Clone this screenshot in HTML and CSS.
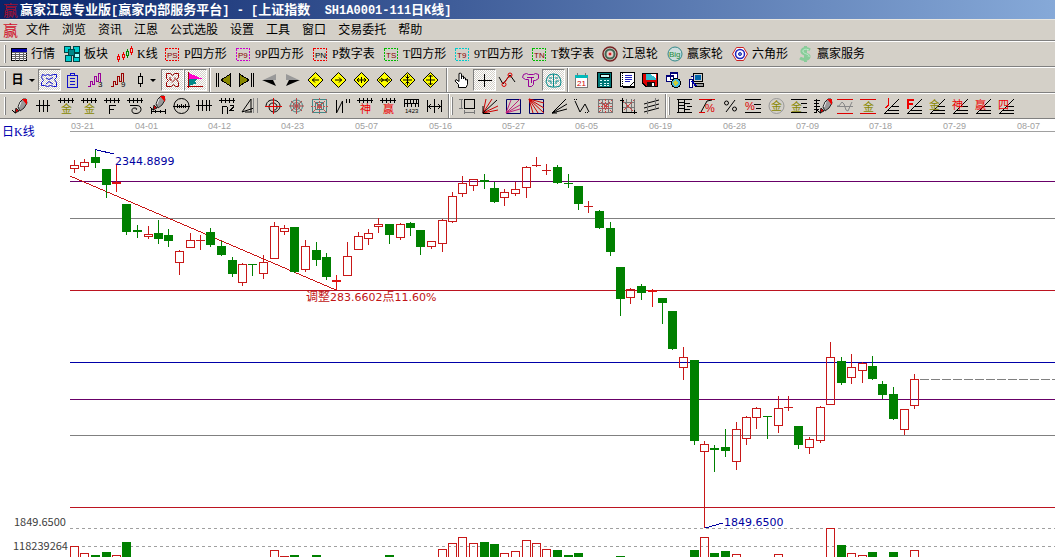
FILE: index.html
```html
<!DOCTYPE html>
<html lang="zh-CN">
<head>
<meta charset="utf-8">
<title>赢家江恩专业版</title>
<link rel="stylesheet" href="styles.css">
</head>
<body>
<svg class="defs" aria-hidden="true">
  <symbol id="comb" viewBox="0 0 17 16"><path d="M0 2.500h16M2.500 0v5M6.500 0v5M10.500 0v5M14.500 0v5"/></symbol>
  <symbol id="steps" viewBox="0 0 17 16"><path d="M1 15.500h15M5 12.500h11M9 8.500h7M1 16L16 1"/></symbol>
  <symbol id="diamond" viewBox="0 0 17 16"><path d="M8.500 .5L16 8L8.500 15.500L1 8z" fill="#ff0" stroke="#000"/></symbol>
  <symbol id="pen" viewBox="0 0 17 16"><g shape-rendering="auto"><path d="M6 9l2-5 3-3h3l1 4-3 5-4 3z" fill="#999" stroke="#222"/><path d="M10 1h5v6z" fill="#e00" stroke="none"/><path d="M4 10l3 3-4 2z" fill="#d00" stroke="#222"/><path d="M0 12l2 2 2 1" stroke="#000"/><path d="M9 4l-2 5" stroke="#eee"/></g></symbol>
</svg>

<header class="titlebar"><span class="logo">赢</span><h1>赢家江恩专业版<span>[</span>赢家内部服务平台<span>] - [</span>上证指数<span>&nbsp; SH1A0001-111</span>日<span>K</span>线<span>]</span></h1></header>

<nav class="menubar"><span class="logo">赢</span>
  <button>文件</button><button>浏览</button><button>资讯</button><button>江恩</button><button>公式选股</button><button>设置</button><button>工具</button><button>窗口</button><button>交易委托</button><button>帮助</button>
</nav>

<div class="toolbar links">
  <i class="grip"></i>
  <button class="tool"><svg class="ic"><path d="M.5 2.500h15v12h-15z" fill="#fff"/><path d="M1 3h15v3H1z" fill="#00a" stroke="none"/><path d="M1 6.500h15M1 8.500h15M1 10.500h15M1 12.500h15M4.500 6v9M8.500 6v9M12.500 6v9" stroke="#666"/></svg><span class="w24">行情</span></button>
  <button class="tool"><svg class="ic"><g fill="#0cc" stroke="#044"><path d="M.5.5h6v6h-6zM9.500.5h6v6h-6zM1.500 9.500h6v6h-6zM9.500 9.500h6v6h-6z"/><path d="M4.500 3.500h6v6h-6z" fill="#088"/><path d="M10.500 7.500h5v4h-5z" fill="#9ff"/></g></svg><span class="w24">板块</span></button>
  <button class="tool"><svg class="ic"><g stroke="#e00"><path d="M1.500 8v2M1.500 14v2M.5 10.500h2v3h-2zM6.500 6v2M6.500 12v2M5.500 8.500h2v3h-2zM14.500 0v2M14.500 7v2M13.500 2.500h2v4h-2z"/><path d="M10.500 3v2M10.500 10v2M9.500 5.500h2v4h-2z" stroke="#080"/></g></svg><span class="w18">K线</span></button>
  <button class="tool"><svg class="ic"><path class="dot" d="M1.500 2.500h13v12h-13z" stroke="#e00"/><text x="3" y="12" fill="#800">PS</text></svg><span class="w42">P四方形</span></button>
  <button class="tool"><svg class="ic"><path class="dot" d="M1.500 2.500h13v12h-13z" stroke="#c0c"/><text x="3" y="12" fill="#800">P9</text></svg><span class="w48">9P四方形</span></button>
  <button class="tool"><svg class="ic"><path class="dot" d="M1.500 2.500h13v12h-13z" stroke="#e00"/><text x="3" y="12" fill="#000">PN</text></svg><span class="w42">P数字表</span></button>
  <button class="tool"><svg class="ic"><path class="dot" d="M1.500 2.500h13v12h-13z" stroke="#0b0"/><text x="3" y="12" fill="#800">TS</text></svg><span class="w42">T四方形</span></button>
  <button class="tool"><svg class="ic"><path class="dot" d="M1.500 2.500h13v12h-13z" stroke="#0cc"/><text x="3" y="12" fill="#800">T9</text></svg><span class="w48">9T四方形</span></button>
  <button class="tool"><svg class="ic"><path class="dot" d="M1.500 2.500h13v12h-13z" stroke="#0b0"/><text x="3" y="12" fill="#800">TN</text></svg><span class="w42">T数字表</span></button>
  <button class="tool"><svg class="ic soft"><circle cx="8" cy="8" r="7" stroke="#722" stroke-width="1.500"/><circle cx="8" cy="8" r="4.500" stroke="#465" stroke-width="2"/><circle cx="8" cy="8" r="2" fill="#c22" stroke="#fcc"/></svg><span class="w36">江恩轮</span></button>
  <button class="tool"><svg class="ic soft"><circle cx="8" cy="8" r="7" fill="#cdd" stroke="#388"/><text x="2" y="11" fill="#283">Big</text></svg><span class="w36">赢家轮</span></button>
  <button class="tool"><svg class="ic soft"><path d="M4.500 1.500h7l4 6.500-4 6.500h-7L.5 8z" fill="#fff" stroke="#c22"/><circle cx="8" cy="8" r="4.500" stroke="#22b" stroke-width="1.500"/><circle cx="8" cy="8" r="1.500" fill="#69c" stroke="#22b"/></svg><span class="w36">六角形</span></button>
  <button class="tool"><svg class="ic soft"><g stroke="#8c9" stroke-width="3"><path d="M13 4C9 1 4 3 5 6s8 2 7 5-6 3-9 1M8.500 0v16"/></g><path d="M12 4C8 2 5 4 6 6s7 2 6 5" stroke="#bec"/></svg><span class="w48">赢家服务</span></button>
</div>

<div class="toolbar">
  <i class="grip"></i>
  <button class="btn drop period" aria-label="周期">日<i class="caret"></i></button>
  <button class="btn on" aria-label="形态"><svg class="ic soft tint-blue"><path d="M1.500 2.500l3 1 2-1 3 1 3-1h3v3l-2 2 2 3v4h-3l-3-1-3 1-3-1h-3v-3l2-2-2-3zM5 6l3 1.500 4-2M5 12l3-2.500 4 2.500"/></svg></button>
  <button class="btn" aria-label="剪贴板"><svg class="ic tint-blue"><rect x="3.500" y="3.500" width="10" height="12" rx="1"/><path d="M6.500 3V1.500h4V3M6 6.500h5M6 9.500h5M6 12.500h5"/></svg></button>
  <button class="btn" aria-label="三浪"><svg class="ic"><path d="M1 14.500h2.500v-5h2v3h2v-8h2v5h2v-8h2v8" stroke="#909"/><text x="11" y="15">3</text></svg></button>
  <button class="btn" aria-label="九浪"><svg class="ic"><path d="M1 14.500h2.500v-5h2v3h2v-8h2v5h2v-8h2v8" stroke="#900"/><text x="11" y="15">9</text></svg></button>
  <button class="btn drop" aria-label="K线样式"><svg class="ic slim"><path d="M4.500 1v3M4.500 12v3M2.500 4.500h4v7h-4z"/></svg><i class="caret"></i></button>
  <button class="btn on" aria-label="轮廓"><svg class="ic soft tint-red"><path d="M2.500 1.500h4l2 2 2-2h4v4l-2 2 2 3v4h-3l-2-2-2 2h-5v-4l2-2-2-2zM6 5v3h2M11 5.500v2l-3 3"/></svg></button>
  <button class="btn on" aria-label="筹码"><svg class="ic"><path d="M2 1l14 6H2z" fill="#f0c" stroke="none"/><path d="M2 7h9l-4 3 3 1-8 3z" fill="#088" stroke="none"/><path d="M1.500 0v16M0 14.500h16" stroke="#a00"/></svg></button>
  <i class="sep s5"></i>
  <button class="btn" aria-label="首页"><svg class="ic"><path d="M15.500 2v12L6 8z" fill="#880"/><path d="M1.500 1v14M3.500 1v14" /></svg></button>
  <button class="btn" aria-label="末页"><svg class="ic"><path d="M1.500 2v12L11 8z" fill="#880"/><path d="M13.500 1v14M15.500 1v14"/></svg></button>
  <button class="btn" aria-label="前移"><svg class="ic soft"><path d="M15 2v6H2z" fill="#999" stroke="none"/><path d="M15 14l-3-6H1z" fill="#000" stroke="none"/></svg></button>
  <button class="btn" aria-label="后移"><svg class="ic soft"><path d="M2 2v6h13z" fill="#999" stroke="none"/><path d="M2 14l3-6h11z" fill="#000" stroke="none"/></svg></button>
  <button class="btn" aria-label="左"><svg class="ic soft"><use href="#diamond"/><path d="M5 8h7M8 5.500L5.500 8 8 10.500"/></svg></button>
  <button class="btn" aria-label="右"><svg class="ic soft"><use href="#diamond"/><path d="M5 8h7M9 5.500L11.500 8 9 10.500"/></svg></button>
  <button class="btn" aria-label="展宽"><svg class="ic soft"><use href="#diamond"/><path d="M4 8h9M6 6L4 8l2 2M11 6l2 2-2 2M8.500 5v6"/></svg></button>
  <button class="btn" aria-label="收窄"><svg class="ic soft"><use href="#diamond"/><path d="M3 8h11M5 6l2.500 2L5 10M12 6L9.500 8l2.500 2"/></svg></button>
  <button class="btn" aria-label="压缩"><svg class="ic soft"><use href="#diamond"/><path d="M4 8h9M8.500 2.500v11M6.500 4.500l2 2 2-2M6.500 11.500l2-2 2 2"/></svg></button>
  <button class="btn" aria-label="拉伸"><svg class="ic soft"><use href="#diamond"/><path d="M4 8h9M8.500 3v10M6.500 5l2-2 2 2M6.500 11l2 2 2-2"/></svg></button>
  <i class="sep s8"></i>
  <button class="btn" aria-label="拖动"><svg class="ic soft"><path d="M5.500 15.500v-3L2 9l1-1.500 3 2V1.500l1.500-.5 1 1v5V4.500l2-.5v3-1.500l2 .5v2l2-.5v5l-1.500 3z" fill="#fff"/></svg></button>
  <button class="btn on" aria-label="十字光标"><svg class="ic"><path d="M2 8.500h14M8.500 2v13"/></svg></button>
  <button class="btn" aria-label="转折点"><svg class="ic soft"><path d="M0 5l4 7 7-9 5 7" /><g stroke="#d00"><circle cx="5" cy="12.500" r="2"/><circle cx="11" cy="3" r="2"/><path d="M6 10l4-6"/></g></svg></button>
  <button class="btn" aria-label="图案"><svg class="ic soft tint-purple"><path d="M1.500 2.500l3-1 2 1h5l2-1 3 1v4l-3 2h-2v4l-2 2h-3v-7h-3l-3-2zM5 5.500h7M9.500 6v5"/></svg></button>
  <button class="btn on" aria-label="思维"><svg class="ic soft tint-teal"><path d="M8.500 2v13M8 2l-4 1-2 3-1 4 2 4 4 1h4l4-1 1-4-1-4-2-3-4-1zM4 6h3M3 9h3v3M10 6h3M11 9h3M11 9v3"/></svg></button>
  <i class="sep s5"></i>
  <button class="btn" aria-label="日历"><svg class="ic"><path d="M2.500 3.500h12v12h-12z" fill="#fff" stroke="#777"/><path d="M2 3h13v3H2z" fill="#0bb" stroke="none"/><path d="M4.500 1v3M12.500 1v3" stroke="#777"/><text x="4" y="14" fill="#c00">21</text></svg></button>
  <button class="btn" aria-label="计算器"><svg class="ic"><path d="M1.500.5h14v15h-14z" fill="#077"/><path d="M4 2.500h9v3H4z" fill="#cff"/><path d="M4 8.500h2M7.500 8.500h2M11 8.500h2M4 11h2M7.500 11h2M11 11h2M4 13.500h2M7.500 13.500h2M11 13.500h2" stroke="#dff"/></svg></button>
  <button class="btn" aria-label="记事本"><svg class="ic"><path d="M1.500.5h14v14h-14z" fill="#fff"/><path d="M3.500 1v14" stroke-dasharray="1 1"/><path d="M6 3.500h7M6 5.500h7M6 7.500h7M6 9.500h5" stroke="#22b"/><path d="M11 14l4-4M15.500 1v14.500H4"/></svg></button>
  <button class="btn" aria-label="保存"><svg class="ic"><path d="M.5 1.500h15v13H4l-3-3z" fill="#d00"/><path d="M4 2h10v6H4z" fill="#3bc" stroke="none"/><path d="M8 2h6v4z" fill="#fff" stroke="none"/><path d="M5 10h8v5H5z" fill="#111" stroke="none"/><path d="M10 11h2v3h-2z" fill="#fff" stroke="none"/></svg></button>
  <button class="btn" aria-label="网络"><svg class="ic"><path d="M5.500.5h7v7h-7zM1.500 3.500h7v6h-7z" fill="#fff" stroke="#007"/><path d="M2 4.500h6M6 1.500h6" stroke="#007"/><circle cx="11" cy="11" r="4.500" fill="#4bd"/><path d="M8 10l3-2 2 3-3 3z" fill="#cc3" stroke="none"/></svg></button>
  <button class="btn" aria-label="电话"><svg class="ic"><path d="M5.500 1.500h9v8h-9z" fill="#ccc"/><path d="M7 3h6v5H7z" fill="#06a" stroke="none"/><path d="M7.500 11.500h8v3h-8z" fill="#999"/><path d="M1.500 7.500h3v8h-3zM3 4.500h2v3" fill="#fff" stroke="#007"/><path d="M4 9l4 5" stroke="#00a" stroke-width="2"/></svg></button>
</div>

<div class="toolbar draw">
  <i class="grip"></i>
  <button class="btn" aria-label="画笔"><svg class="ic"><use href="#pen"/></svg></button>
  <button class="btn" aria-label="刻度"><svg class="ic"><path d="M1 7.500h14M4.500 2v12M8.500 2v12M12.500 2v12"/></svg></button>
  <button class="btn" aria-label="黄金刻度"><svg class="ic"><use href="#comb"/><text class="cn" x="3" y="15" fill="#880">金</text></svg></button>
  <button class="btn" aria-label="黄金时间"><svg class="ic"><use href="#comb"/><text class="cn" x="3" y="15" fill="#880">金</text></svg></button>
  <button class="btn" aria-label="斐波那契"><svg class="ic"><use href="#comb"/><path d="M5.500 16V7.500H12M5 11.500h5"/></svg></button>
  <button class="btn" aria-label="螺旋刻度"><svg class="ic soft"><use href="#comb"/><path d="M3 7.500h7c3 0 4 2 4 4s-2 4-5 4-4-1-4-3 1-2.500 3-2.500 2 1 1 2"/></svg></button>
  <button class="btn" aria-label="画尺"><svg class="ic"><use href="#pen" y="-3"/><path d="M1 13.500h15M1.500 11v5M5.500 12v3M10.500 12v3M15.500 11v5"/></svg></button>
  <button class="btn" aria-label="圆周"><svg class="ic soft"><circle cx="8.500" cy="8" r="7.500"/><path d="M0 8.500h17M4.500 6v4M6.500 7v3M8.500 6v4M10.500 7v3M12.500 6v4"/></svg></button>
  <button class="btn" aria-label="四刻度"><svg class="ic"><path d="M0 7.500h16M2.500 2v11M6.500 2v11M10.500 2v11M13.500 2v11"/></svg></button>
  <button class="btn" aria-label="平方"><svg class="ic"><use href="#comb"/><path d="M3.500 16V8.500h4l1 1V16M11 7.500h3v2l-3 3h3.500"/></svg></button>
  <button class="btn" aria-label="角度"><svg class="ic soft"><path d="M0 14L9 1v13M3 14h7M0 14l12-4"/><path d="M11.500 0v15M15.500 0v15" stroke="#888"/></svg></button>
  <button class="btn" aria-label="螺旋"><svg class="ic soft"><path d="M1 9c0-5 3-7 7-7s7 3 7 6-3 6-6 6-5-2-5-5 2-4 4-4 4 1 4 4-2 3-4 3"/><path d="M0 8.500h17M8.500 0v16" stroke="#d00"/></svg></button>
  <button class="btn" aria-label="蛛网"><svg class="ic soft"><g stroke="#488"><circle cx="8.500" cy="8" r="6"/><circle cx="8.500" cy="8" r="3.500"/><circle cx="8.500" cy="8" r="1.500"/></g><path d="M1 8h15M8.500 0v16M3 3l11 10M14 3L3 13" stroke="#b44"/></svg></button>
  <button class="btn" aria-label="方网"><svg class="ic"><path d="M1.500 1.500h14v13h-14zM4.500 4.500h8v7h-8zM6.500 6.500h4v3h-4z" stroke="#488"/><path d="M0 8h17M8.500 0v16M1 1l15 14M16 1L1 15" stroke="#b55" stroke-dasharray="2 1"/></svg></button>
  <button class="btn" aria-label="波动"><svg class="ic soft"><path d="M2.500 2v13L8.500 3v12M12.500 1v4M15.500 1v4"/></svg></button>
  <button class="btn" aria-label="神刻度"><svg class="ic"><use href="#comb"/><text class="cn" x="3" y="15" fill="#e00">神</text></svg></button>
  <button class="btn" aria-label="赢刻度"><svg class="ic"><use href="#comb"/><text class="cn" x="3" y="15" fill="#e00">赢</text></svg></button>
  <button class="btn" aria-label="标尺"><svg class="ic"><path d="M1.500 9V1.500h14V9M1 5.500h15M4.500 1v4M7.500 1v4M10.500 1v4M13.500 1v4M4.500 6v3M8.500 6v3M12.500 6v3"/><text class="tiny" x="2" y="15">1423</text></svg></button>
  <button class="btn" aria-label="间距"><svg class="ic soft"><path d="M1.500 2v12M8.500 1v14M15.500 2v12M2 8.500h13M5 6L2.500 8.500 5 11M12 6l2.500 2.500L12 11"/></svg></button>
  <i class="sep s5"></i><i class="grip"></i>
  <button class="btn" aria-label="矩形"><svg class="ic"><path d="M5.500 1.500h10v9h-10z"/><path d="M0 1.500h4M0 10.500h4M2.500 2v8M5.500 12v4M15.500 12v4M6 14.500h9" stroke="#777"/></svg></button>
  <button class="btn" aria-label="扇形"><svg class="ic soft"><path d="M1 15L4 1M1 15L10 1M1 15l15-7M1 15l15-3" stroke="#c00"/><path d="M1 8v7.500h7M1 15L15 2"/></svg></button>
  <button class="btn" aria-label="方扇"><svg class="ic soft"><path d="M1.500 1.500h14v14h-14z" stroke="#006"/><path d="M1 15L15 1M1 15L6 2M1 15l14-8M1 15l14-4" stroke="#c0207a"/></svg></button>
  <button class="btn" aria-label="反向方扇"><svg class="ic soft"><path d="M1.500 1.500h14v14h-14z" stroke="#006"/><path d="M1 1l15 14M1 1l9 14M1 1l4 14M1 1l15 9M1 1l15 4" stroke="#c00"/></svg></button>
  <button class="btn" aria-label="射线"><svg class="ic soft"><path d="M1 15L15 1M1 15L16 6M1 15l15-4M1 15h5"/></svg></button>
  <button class="btn" aria-label="折线"><svg class="ic soft"><path d="M1 3l5 11 5-8 4 8"/><path d="M0 1.500h3M11 14.500h4" stroke-dasharray="1 1"/></svg></button>
  <button class="btn" aria-label="网格"><svg class="ic"><path d="M1.500 1.500h14v13h-14zM1 5.500h15M1 10.500h15M5.500 1v14M11.500 1v14" stroke="#777"/><path d="M8.500 1v14M1 8h15M2 2l13 12M15 2L2 14" stroke="#c44" stroke-dasharray="2 1"/></svg></button>
  <button class="btn" aria-label="坐标网格"><svg class="ic"><path d="M3 4.500h12M3 9.500h12M6.500 1v14M11.500 1v14M14.500 1v14" stroke="#777"/><path d="M3 3l11 11M14 2L3 13" stroke="#c44" stroke-dasharray="2 1"/><path d="M2.500 0v14.500H17M0 2.500h4M14.500 12v4"/></svg></button>
  <button class="btn" aria-label="通道"><svg class="ic soft"><path d="M1 6l15-4M1 10l15-4M1 14l15-4"/><path d="M4.500 3v13M12.500 0v12" stroke="#777"/></svg></button>
  <i class="sep s5"></i><i class="grip"></i>
  <button class="btn" aria-label="梯级"><svg class="ic"><path d="M2.500 1v14M8.500 1v14M1 1.500h15M2 4.500h6M2 7.500h6M2 10.500h6M1 14.500h15M9 5.500h5M11 8.500h5M9 11.500h5"/></svg></button>
  <button class="btn" aria-label="百分比波段"><svg class="ic soft"><path d="M0 1.500h16M0 14.500h6" stroke="#d00"/><path d="M2 14L8 3l5-1"/><text class="pct" x="6" y="14" fill="#d00">%</text></svg></button>
  <button class="btn" aria-label="百分比"><svg class="ic soft"><path d="M13 2L4 14"/><circle cx="4.500" cy="5" r="2"/><circle cx="12.500" cy="11" r="2"/></svg></button>
  <button class="btn" aria-label="百分比线"><svg class="ic"><path d="M0 1.500h16M9 6.500h7M11 10.500h5M0 14.500h16"/><text class="pct" x="0" y="12" fill="#d00">%</text></svg></button>
  <button class="btn" aria-label="黄金圆"><svg class="ic soft"><circle cx="8.500" cy="8" r="7.500" stroke="#999"/><text class="cn" x="3" y="12" fill="#880">金</text></svg></button>
  <button class="btn" aria-label="黄金线"><svg class="ic"><path d="M0 1.500h16M10 5.500h6M12 9.500h4M0 14.500h16"/><text class="cn" x="0" y="13" fill="#880">金</text></svg></button>
  <button class="btn" aria-label="刻度画笔"><svg class="ic"><use href="#pen" x="3"/><path d="M2.500 1v14M0 2.500h6M0 5.500h5M0 8.500h6M0 11.500h5M0 14.500h3"/></svg></button>
  <button class="btn" aria-label="波浪"><svg class="ic soft"><path d="M0 1.500h16M0 15.500h16" stroke="#d00"/><path d="M0 8h2l3-4 2 2 2 6 2 1 3-7 1-2M0 8.500h16" stroke="#888"/></svg></button>
  <button class="btn" aria-label="黄金带"><svg class="ic"><path d="M0 1.500h16M0 15.500h16" stroke="#d00"/><text class="cn" x="3" y="13" fill="#880">金</text></svg></button>
  <button class="btn" aria-label="J线"><svg class="ic"><use href="#steps"/><path d="M5.500 0v7l-2 2h-2" stroke="#e00"/></svg></button>
  <button class="btn" aria-label="F线"><svg class="ic"><use href="#steps"/><path d="M2 11V2h6M2 6h5" stroke="#e00" stroke-width="2"/></svg></button>
  <button class="btn" aria-label="金线"><svg class="ic"><use href="#steps"/><text class="cn" x="0" y="11" fill="#880">金</text></svg></button>
  <button class="btn" aria-label="神线"><svg class="ic"><use href="#steps"/><text class="cn" x="0" y="11" fill="#e00">神</text></svg></button>
  <button class="btn" aria-label="赢线"><svg class="ic"><use href="#steps"/><text class="cn" x="0" y="11" fill="#e00">赢</text></svg></button>
  <button class="btn" aria-label="四线"><svg class="ic"><use href="#steps"/><text class="cn" x="0" y="11" fill="#e00">四</text></svg></button>
</div>

<main class="chart">
  <svg class="plot">
    <text class="name" x="2" y="17">日K线</text>
    <g class="dates" id="dates"></g>
    <svg x="70" width="100%" height="100%">
      <g class="levels">
        <path class="axis" d="M0 12.500h4000"/>
        <path class="purple" d="M0 62.500h4000"/>
        <path class="gray" d="M0 99.500h4000"/>
        <path class="red" d="M0 171.500h4000"/>
        <path class="blue" d="M0 243.500h4000"/>
        <path class="purple" d="M0 280.500h4000"/>
        <path class="gray" d="M0 316.500h4000"/>
        <path class="red" d="M0 388.500h4000"/>
        <path class="dash" d="M0 409.500h4000M0 427.500h4000"/>
        <path class="last" d="M850 260.500h3200"/>
        <path class="trend" d="M0 57L266 171"/>
      </g>
    </svg>
    <g id="candles"></g>
    <path class="lead" d="M95 30.500L114 35M705 409L723 404"/>
    <text class="price" x="115" y="46">2344.8899</text>
    <text class="price" x="724" y="407">1849.6500</text>
    <text class="note" x="306" y="182">调整<tspan>283.6602</tspan>点<tspan>11.60%</tspan></text>
    <text class="scale" x="14" y="407">1849.6500</text>
    <text class="scale" x="13" y="431">118239264</text>
  </svg>
</main>
<script src="chart.js"></script>
</body>
</html>
```

FILE: styles.css
```css
* { box-sizing: border-box; }
body {
  margin: 0;
  min-height: 100vh;
  display: flex;
  flex-direction: column;
  overflow: hidden;
  background: #fff;
  color: #000;
  font: 12px/16px "Liberation Serif", "Noto Sans CJK SC", sans-serif;
}
button {
  border: 0;
  padding: 0;
  background: none;
  color: inherit;
  font: inherit;
  white-space: nowrap;
}
.defs { position: absolute; width: 0; height: 0; }

.titlebar {
  display: flex;
  align-items: center;
  height: 19px;
  padding-left: 3px;
  overflow: hidden;
  background: linear-gradient(90deg, #0a246a, #86a9d8);
  color: #fff;
}
.titlebar h1 {
  margin: 0;
  font: bold 13px/18px "Noto Sans CJK SC", sans-serif;
  white-space: nowrap;
}
.titlebar h1 span { font: bold 12px/18px "Liberation Mono", monospace; white-space: pre; }
.logo {
  width: 17px;
  color: #d0102a;
  font: 15px/18px "Noto Sans CJK SC", sans-serif;
}
.titlebar .logo { color: #a01030; }

.menubar {
  display: flex;
  align-items: center;
  height: 22px;
  padding-left: 3px;
  background: #d4d0c8;
  border-top: 1px solid #e8e6e0;
  border-bottom: 1px solid #808080;
}
.menubar button { padding: 0 6px; }

.toolbar {
  display: flex;
  align-items: center;
  height: 26px;
  padding-left: 4px;
  overflow: hidden;
  background: #d4d0c8;
  border-top: 1px solid #fff;
  border-bottom: 1px solid #808080;
}
.grip {
  flex: none;
  width: 2px;
  height: 18px;
  margin-right: 2px;
  background: #fff;
  border-right: 1px solid #808080;
}
.draw .grip { margin-right: 3px; }
.links .grip { margin-right: 5px; }
.tool {
  display: flex;
  align-items: center;
  gap: 3px;
  margin-right: 9px;
}
.w18 { width: 18px; }
.w24 { width: 24px; }
.w36 { width: 36px; }
.w42 { width: 42px; }
.w48 { width: 48px; }

.btn {
  flex: none;
  display: flex;
  align-items: center;
  justify-content: center;
  width: 23px;
  height: 22px;
}
.drop { width: 31px; gap: 5px; }
.period { width: 30px; font-weight: bold; }
.on {
  border: 1px solid;
  border-color: #808080 #fff #fff #808080;
  background: repeating-conic-gradient(#fff 0 25%, #d4d0c8 0 50%) 0 0 / 2px 2px;
}
.caret {
  border: 3px solid transparent;
  border-top-color: #000;
  border-bottom: 0;
}
.sep {
  flex: none;
  height: 26px;
  border-left: 1px solid #808080;
  box-shadow: inset 1px 0 #fff;
}
.s5 { width: 3px; margin-left: 2px; }
.s8 { width: 4px; margin-left: 4px; }

.ic {
  flex: none;
  width: 17px;
  height: 16px;
  overflow: visible;
  fill: none;
  stroke: #000;
  shape-rendering: crispEdges;
}
.tint-blue { stroke: #11c; }
.tint-red { stroke: #900; }
.tint-purple { stroke: #909; }
.tint-teal { stroke: #088; }
.slim { width: 9px; }
.soft { shape-rendering: auto; }
.dot { stroke-dasharray: 2 1; }
.ic text { font: 8px "Liberation Sans", sans-serif; stroke: none; }
.ic text:not([fill]) { fill: #000; }
.ic .cn { font: 11px "Noto Sans CJK SC", sans-serif; }
.ic .pct { font: 11px "Liberation Sans", sans-serif; }
.ic .tiny { font: 6px "Liberation Sans", sans-serif; }

.chart { flex: 1; display: flex; min-height: 0; }
.plot {
  flex: 1;
  min-width: 0;
  overflow: hidden;
  fill: none;
  shape-rendering: crispEdges;
}
.plot text { stroke: none; }
.name { fill: #0000b0; font: 12px "Liberation Serif", "Noto Sans CJK SC", sans-serif; }
.dates { fill: #a0a0a0; font: 9px "Liberation Sans", sans-serif; }
.price { fill: #0000a0; font: 11px "DejaVu Sans", sans-serif; }
.note { fill: #c01414; font: 12px "Noto Sans CJK SC", sans-serif; }
.note tspan { font: 11px "DejaVu Sans", sans-serif; }
.scale { fill: #404040; font: 11px "Noto Sans CJK SC", sans-serif; }
.axis { stroke: #a0a0a0; }
.purple { stroke: #680068; }
.gray { stroke: #808080; }
.levels .red { stroke: #bc1420; }
.blue { stroke: #0000a8; }
.dash { stroke: #a0a0a0; stroke-dasharray: 3 3; }
.last { stroke: #808080; stroke-dasharray: 9 2; }
.trend { stroke: #c81414; }
.lead { stroke: #0000a0; }
.up { stroke: #c81818; }
.flat { stroke: #e01010; fill: #e01010; }
.down { stroke: #008000; fill: #008000; }
```

FILE: chart.js
```js
const NS = "http://www.w3.org/2000/svg";
const TOP = 119; // height of the bars above the chart

// x, high, open/close top, open/close bottom, low, kind (u: up, d: down, f: flat)
const candles = [
[74,160,165,169,173,"u"],[84,159,162,167,171,"u"],[95,149,157,163,168,"d"],[106,169,169,185,198,"d"],
[116,164,182,184,192,"f"],[126,204,204,232,235,"d"],[137,225,230,232,238,"d"],[148,226,234,237,239,"u"],
[158,220,233,239,244,"d"],[168,229,235,241,247,"d"],[179,250,251,263,275,"u"],[190,233,240,248,248,"u"],
[200,235,240,241,250,"u"],[210,228,232,245,247,"d"],[221,241,246,255,256,"d"],[232,257,260,274,277,"d"],
[242,263,264,283,286,"u"],[252,264,264,265,276,"d"],[263,255,262,274,279,"u"],[274,222,226,259,259,"u"],
[284,225,228,232,235,"u"],[294,227,227,272,273,"d"],[305,240,246,270,272,"u"],[316,242,250,260,266,"d"],
[326,253,257,277,280,"d"],[336,275,280,282,290,"f"],[347,242,256,276,276,"u"],[358,232,236,250,250,"u"],
[368,229,233,239,245,"u"],[378,218,224,227,233,"u"],[389,224,224,235,244,"d"],[400,223,224,238,240,"u"],
[410,222,223,228,236,"d"],[420,230,230,247,255,"d"],[431,241,241,247,249,"u"],[442,219,220,244,252,"u"],
[452,192,196,222,223,"u"],[462,176,183,194,197,"u"],[473,179,179,186,191,"u"],[484,174,180,182,189,"d"],
[494,182,188,202,203,"d"],[504,189,192,198,206,"u"],[515,182,189,194,196,"u"],[526,166,167,188,198,"u"],
[536,157,165,166,167,"u"],[546,164,170,171,175,"u"],[557,165,167,183,184,"d"],[568,174,183,184,188,"d"],
[578,186,186,204,210,"d"],[588,201,206,207,213,"u"],[599,210,211,228,229,"d"],[610,222,228,252,256,"d"],
[620,267,267,299,316,"d"],[630,288,289,298,304,"u"],[641,284,286,293,300,"d"],[652,289,290,292,307,"f"],
[662,298,298,303,324,"d"],[672,311,311,349,350,"d"],[683,347,357,368,380,"u"],[694,360,360,441,445,"d"],
[704,441,444,452,528,"u"],[714,445,448,450,472,"d"],[725,429,447,451,457,"d"],[736,422,429,462,470,"u"],
[746,416,417,439,445,"u"],[756,407,408,418,429,"u"],[767,416,416,417,439,"d"],[778,396,408,426,433,"u"],
[788,396,407,408,411,"u"],[798,426,426,445,449,"d"],[809,437,439,448,454,"u"],[820,406,407,441,443,"u"],
[830,342,357,405,405,"u"],[841,357,361,383,385,"d"],[851,354,367,378,384,"u"],[862,362,363,371,383,"u"],
[872,356,366,379,380,"d"],[882,381,384,395,399,"d"],[893,387,394,419,420,"d"],[904,409,409,430,435,"u"],
[914,374,379,406,409,"u"]
];

// x, top of the volume bar, kind
const volumes = [
[74,546,"u"],[84,553,"u"],[95,555,"d"],[106,552,"d"],[116,555,"u"],[126,542,"d"],[274,550,"u"],[284,556,"u"],
[294,555,"d"],[316,555,"d"],[389,555,"d"],[442,549,"u"],[452,543,"u"],[462,537,"u"],[473,543,"u"],[484,542,"d"],
[494,544,"d"],[504,553,"u"],[515,551,"u"],[526,540,"u"],[536,543,"u"],[546,549,"u"],[557,550,"d"],[568,555,"d"],
[578,553,"d"],[620,556,"d"],[694,550,"d"],[704,537,"u"],[714,553,"d"],[725,551,"d"],[736,554,"u"],[778,554,"u"],
[830,528,"u"],[841,545,"d"],[851,553,"u"],[862,555,"u"],[872,552,"d"],[893,552,"d"],[914,550,"u"]
];

const dates = [[71,"03-21"],[135,"04-01"],[208,"04-12"],[281,"04-23"],[355,"05-07"],[429,"05-16"],[502,"05-27"],
[575,"06-05"],[649,"06-19"],[723,"06-28"],[796,"07-09"],[869,"07-18"],[943,"07-29"],[1017,"08-07"]];

const kinds = { u: "up", d: "down", f: "flat" };
const layer = document.getElementById("candles");

function add(parent, tag, attrs) {
  const node = document.createElementNS(NS, tag);
  for (const key in attrs) node.setAttribute(key, attrs[key]);
  parent.append(node);
  return node;
}

function body(x, top, bottom) {
  const y = top - TOP + 0.5;
  if (bottom - top <= 1) return `M${x - 4} ${y}h9`;
  return `M${x - 3.5} ${y}h8v${bottom - top - 1}h-8z`;
}

for (const [x, high, top, bottom, low, kind] of candles) {
  const wick = `M${x + 0.5} ${high - TOP}V${top - TOP}M${x + 0.5} ${bottom - TOP}V${low - TOP}`;
  add(layer, "path", { class: kinds[kind], d: wick + body(x, top, bottom) });
}
for (const [x, top, kind] of volumes) {
  add(layer, "path", { class: kinds[kind], d: body(x, top, 2000) });
}
for (const [x, label] of dates) {
  add(document.getElementById("dates"), "text", { x, y: 10 }).textContent = label;
}
```
